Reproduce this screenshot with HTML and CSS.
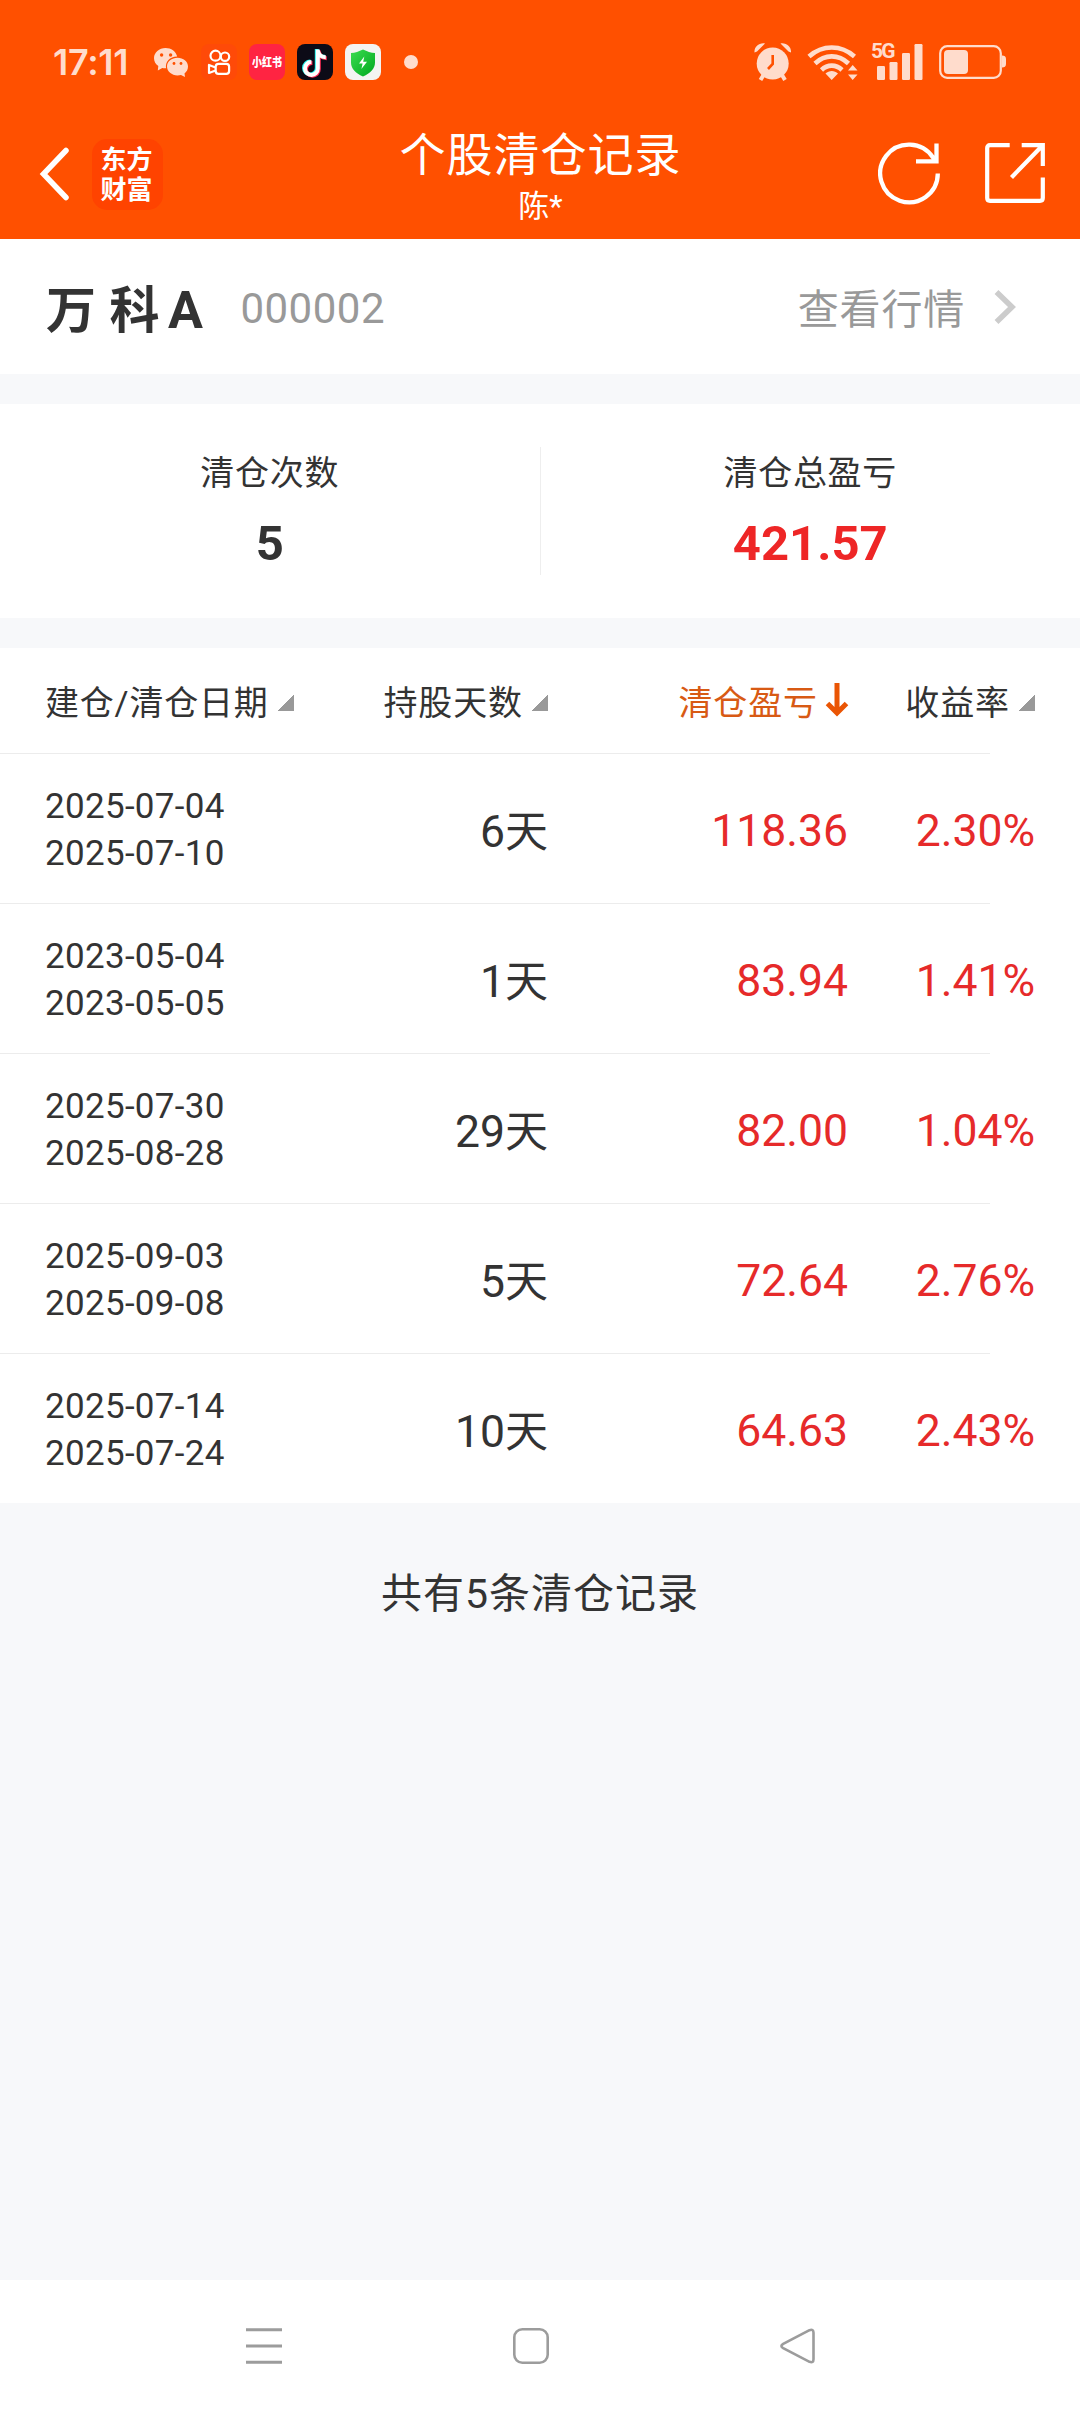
FILE: index.html
```html
<!DOCTYPE html>
<html lang="zh-CN">
<head>
<meta charset="utf-8">
<title>个股清仓记录</title>
<link rel="stylesheet" href="styles.css">
</head>
<body>
<header class="top">
  <div class="status">
    <span class="clock">17:11</span>
    <div class="apps">
      <svg class="wechat" width="34" height="36" viewBox="0 0 34 36"><g fill="#ffdccc"><path d="M11.500 4C5.200 4 0 8.500 0 14.200c0 3.200 1.700 6 4.300 7.900L3.800 26.500l4.500-2.600c1.200.3 2.500.4 3.800.3-1.200-6.500 3.900-11.900 11.100-11.800C21.900 7.500 17.200 4 11.500 4z"/><path d="M34 22.500c0-4.900-4.700-8.800-10.500-8.800S13 17.600 13 22.500s4.700 8.900 10.500 8.900c1.200 0 2.400-.2 3.500-.5l4 2.200-.5-3.700c2.200-1.600 3.500-4.100 3.500-6.900z"/></g><g fill="#ff5000"><circle cx="7.600" cy="11" r="1.700"/><circle cx="16.600" cy="11" r="1.700"/><circle cx="20" cy="19.500" r="1.400"/><circle cx="27" cy="19.500" r="1.400"/></g></svg>
      <svg width="36" height="36" viewBox="0 0 36 36"><rect width="36" height="36" rx="8" fill="#ff4a08"/><g fill="none" stroke="#fff" stroke-width="2.200"><circle cx="14.500" cy="11.700" r="5"/><circle cx="24" cy="12.700" r="4.200"/><rect x="14.700" y="19.800" width="13.400" height="10" rx="2.800"/><path d="M14.500 23.500 8 21v8l6.500-2.500" stroke-linejoin="round"/></g></svg>
      <span class="xhs"><b>小红书</b></span>
      <svg width="36" height="36" viewBox="0 0 36 36"><rect width="36" height="36" rx="8" fill="#0c0b17"/><g fill="none" stroke-width="4"><path d="M19.800 5v19a6.400 6.400 0 1 1-6.400-6.400M19.800 6c.6 4 3.600 6.600 8 6.700" stroke="#25f4ee"/><path d="M21.800 6.500v18.800a6.400 6.400 0 1 1-6.400-6.400M21.800 7.500c.6 4 3.600 6.600 8 6.700" stroke="#fe2c55"/><path d="M20.800 5.500v19a6.400 6.400 0 1 1-6.400-6.400M20.800 6.500c.6 4 3.600 6.600 8 6.700" stroke="#fff"/></g></svg>
      <svg width="36" height="36" viewBox="0 0 36 36"><defs><linearGradient id="g" x2="1" y2="1"><stop stop-color="#3bdc50"/><stop offset="1" stop-color="#00a81e"/></linearGradient></defs><rect width="36" height="36" rx="8" fill="#f4f4f2"/><path d="M18 5.500c4 2 8 3.200 12 3.600v9.400c0 6-4.500 10.800-12 14-7.500-3.200-12-8-12-14V9.100c4-.4 8-1.600 12-3.600z" fill="url(#g)"/><path d="M19.300 12.500 14 19.600h3.600l-1.200 5.400 5.600-7.300h-3.800z" fill="#fff"/></svg>
    </div>
    <i class="dot"></i>
    <div class="signals">
      <svg width="38" height="40" viewBox="0 0 38 40"><g fill="#ffdccc"><circle cx="18.700" cy="21.500" r="16"/><path d="M.5 10.500C0 5 5 .5 11 1.500L3 9.500zM37 10.500C37.500 5 32.500.5 26.500 1.500l8 8z"/></g><path d="m9.500 33-3 5M28 33l3 5" stroke="#ffdccc" stroke-width="4"/><path d="M18.700 13v9l-4.700 5" fill="none" stroke="#ff5000" stroke-width="2.600"/></svg>
      <svg width="52" height="40" viewBox="0 0 52 40"><g fill="none" stroke="#ffdccc" stroke-width="4.600"><path d="M2 14.500c13.500-12 32-12 45.500 0M8 21.500c10-9.500 23.500-9.500 33.500 0M14.500 28c6-5.800 14.500-5.800 20.500 0"/></g><path d="M18.500 31.500c3.500-3.500 9-3.500 12.500 0L24.700 38zM41 28.500l4.700-5.500 4.800 5.500zM41 32.500l4.700 5.500 4.800-5.500z" fill="#ffdccc"/></svg>
      <div class="cell"><b>5G</b><svg width="52" height="38" viewBox="0 0 52 38"><g fill="#ffdccc"><rect x="6" y="23" width="8" height="14" rx="1.200"/><rect x="18.500" y="19" width="8" height="18" rx="1.200"/><rect x="31" y="10" width="8" height="27" rx="1.200"/><rect x="43.500" y="1" width="8" height="36" rx="1.200"/></g></svg></div>
      <svg width="68" height="34" viewBox="0 0 68 34"><rect x="1.200" y="1.200" width="60.600" height="31.600" rx="7" fill="none" stroke="#ffdccc" stroke-width="2.200"/><rect x="5" y="5" width="24" height="24" rx="4" fill="#ffdccc"/><path d="M63 10.500c2.500 0 4 1 4 3.500v5c0 2.500-1.500 3.500-4 3.500z" fill="#ffdccc"/></svg>
    </div>
  </div>
  <div class="bar">
    <div class="bar-left">
      <svg width="32" height="56" viewBox="0 0 32 56"><path d="M27 4.500 4.500 28 27 51.500" fill="none" stroke="#fff" stroke-width="5.500" stroke-linecap="round"/></svg>
      <div class="logo"><span>东方</span><span>财富</span></div>
    </div>
    <div class="titles"><h1>个股清仓记录</h1><p>陈*</p></div>
    <div class="bar-right">
      <svg width="64" height="64" viewBox="0 0 64 64"><path d="M59.800 32.500A28.800 28.800 0 1 1 55 16.500l3.500 4.500M58.500 2.500v17.800h-20.500" fill="none" stroke="#fff" stroke-width="4.300"/></svg>
      <svg width="60" height="60" viewBox="0 0 60 60"><path d="M24.700 2.200H5Q2.200 2.200 2.200 5v50Q2.200 57.800 5 57.800h50Q57.800 57.800 57.800 55V34.500M36.700 2.200h21.100v20.800M57 3 26.500 34.500" fill="none" stroke="#fff" stroke-width="4.200"/></svg>
    </div>
  </div>
</header>

<section class="stock">
  <h2>万 科<span>A</span></h2>
  <span class="code">000002</span>
  <a class="quote"><span>查看行情</span><svg width="22" height="36" viewBox="0 0 22 36"><path d="M2.500 3 18 18 2.500 33" fill="none" stroke="#ccc" stroke-width="5.500"/></svg></a>
</section>

<section class="summary">
  <div class="stat"><span>清仓次数</span><strong>5</strong></div>
  <div class="stat"><span>清仓总盈亏</span><strong class="gain">421.57</strong></div>
</section>

<section class="table">
  <div class="row head">
    <span>建仓/清仓日期<i class="sort"></i></span>
    <span>持股天数<i class="sort"></i></span>
    <span class="active">清仓盈亏<svg width="24" height="34" viewBox="0 0 24 34"><path d="M12 0v30M2.500 20.500 12 30l9.500-9.500" fill="none" stroke="#ea5504" stroke-width="5"/></svg></span>
    <span>收益率<i class="sort"></i></span>
  </div>
  <div class="row"><span class="dates">2025-07-04<br>2025-07-10</span><span class="days">6<small>天</small></span><span class="num">118.36</span><span class="num">2.30%</span></div>
  <div class="row"><span class="dates">2023-05-04<br>2023-05-05</span><span class="days">1<small>天</small></span><span class="num">83.94</span><span class="num">1.41%</span></div>
  <div class="row"><span class="dates">2025-07-30<br>2025-08-28</span><span class="days">29<small>天</small></span><span class="num">82.00</span><span class="num">1.04%</span></div>
  <div class="row"><span class="dates">2025-09-03<br>2025-09-08</span><span class="days">5<small>天</small></span><span class="num">72.64</span><span class="num">2.76%</span></div>
  <div class="row"><span class="dates">2025-07-14<br>2025-07-24</span><span class="days">10<small>天</small></span><span class="num">64.63</span><span class="num">2.43%</span></div>
</section>

<p class="total">共有5条清仓记录</p>

<nav class="keys">
  <svg width="36" height="36" viewBox="0 0 36 36"><path d="M0 1.700h36M0 18h36M0 34.300h36" stroke="#9c9c9c" stroke-width="3"/></svg>
  <svg width="36" height="36" viewBox="0 0 36 36"><rect x="1.300" y="1.300" width="33.400" height="33.400" rx="8" fill="none" stroke="#9c9c9c" stroke-width="2.600"/></svg>
  <svg width="36" height="36" viewBox="0 0 36 36"><path d="M29.500 2.200 3.200 15.800q-3.600 2.200 0 4.400l26.300 13.600q4 1.500 4-2.500V4.700q0-4-4-2.500z" fill="none" stroke="#9c9c9c" stroke-width="2.600"/></svg>
</nav>
</body>
</html>
```
FILE: styles.css
```css
* { box-sizing: border-box; margin: 0; padding: 0; }
body {
  width: 1080px;
  height: 2412px;
  display: flex;
  flex-direction: column;
  background: #f7f8fa;
  color: #333;
  font-family: Roboto, "Noto Sans CJK SC", sans-serif;
  font-weight: 400;
}
svg { display: block; flex: none; }

.top { height: 239px; background: #ff5000; color: #fff; }
.status { height: 124px; padding: 0 73px 0 53px; display: flex; align-items: center; }
.clock { width: 101px; font: 600 36px/40px Inter, sans-serif; color: #ffdccc; letter-spacing: -0.3px; white-space: nowrap; }
.apps { display: flex; gap: 12px; }
.wechat { margin-right: 1px; }
.xhs {
  width: 36px; height: 36px; border-radius: 8px; background: #ff2442; color: #fff;
  display: flex; justify-content: center;
}
.xhs b { font: 900 10px/36px "Noto Sans CJK SC", sans-serif; white-space: nowrap; transform: scaleY(1.25); }
.dot { width: 14px; height: 14px; margin-left: 23px; border-radius: 50%; background: #ffdccc; }
.signals { margin-left: auto; display: flex; align-items: center; gap: 15px; }
.cell { position: relative; margin-left: -3px; margin-right: 1px; }
.cell b { position: absolute; left: 0; top: -2px; font: 700 21px/20px "Roboto", sans-serif; letter-spacing: -1.8px; color: #ffdccc; }

.bar { height: 115px; padding: 0 35px 0 39px; display: grid; grid-template-columns: 1fr auto 1fr; }
.bar-left { display: flex; align-items: center; gap: 21px; height: 100px; }
.logo {
  width: 71px; height: 71px; padding: 4px 2px 0 0; border-radius: 15px; background: #ff4300;
  display: grid; grid-template-rows: 30px 30px; justify-content: center;
  font: 700 26px/30px "Noto Sans CJK SC", sans-serif;
}
.titles { padding-top: 1px; margin-left: -3px; text-align: center; }
.titles h1 { font-size: 46px; line-height: 60px; font-weight: 400; letter-spacing: 1px; }
.titles p { margin-top: 1px; font-size: 31px; line-height: 42px; }
.bar-right { display: flex; align-items: center; justify-content: flex-end; gap: 43px; height: 97px; }

.stock { height: 135px; padding: 0 64px 0 46px; display: flex; align-items: center; background: #fff; }
.stock h2 { padding-top: 8px; font-size: 50px; line-height: 60px; font-weight: 700; letter-spacing: 0.5px; white-space: nowrap; }
.stock h2 span { margin-left: 8px; font-size: 52px; }
.code { margin: 3px 0 0 37px; font-size: 42px; letter-spacing: 0.5px; color: #999; }
.quote { margin-left: auto; display: flex; align-items: center; gap: 29px; font-size: 41px; letter-spacing: 0.8px; color: #999; }
.quote span { margin-bottom: 2px; }

.summary { height: 214px; margin: 30px 0; display: flex; align-items: center; background: #fff; }
.stat { flex: 1; height: 128px; padding-top: 2px; display: flex; flex-direction: column; align-items: center; }
.stat + .stat { border-left: 1px solid #eee; }
.stat span { font-size: 34px; line-height: 48px; letter-spacing: 0.7px; }
.stat strong { margin-top: 17px; font-size: 49px; line-height: 60px; }
.stat .gain { color: #ee2626; }

.table { background: #fff; }
.row {
  height: 150px; padding-left: 45px; display: grid; align-items: center;
  grid-template-columns: 275px 228px 300px 187px;
  background: linear-gradient(#ececec, #ececec) left bottom / 990px 1px no-repeat;
  text-align: right;
}
.row:last-child { height: 149px; background: none; }
.row .dates { padding-top: 2px; font-size: 35px; line-height: 47px; letter-spacing: 0.3px; text-align: left; }
.days { padding-bottom: 2px; font-size: 44.5px; }
.days small { font-size: 43px; }
.num { padding-top: 4px; font-size: 44.5px; color: #e62a2a; }
.head { height: 106px; padding-bottom: 2px; font-size: 34px; letter-spacing: 0.9px; }
.head span { display: flex; align-items: center; justify-content: flex-end; }
.head span:first-child { justify-content: flex-start; letter-spacing: 0.8px; }
.sort { width: 16px; height: 16px; margin: 6px 0 0 9px; background: linear-gradient(135deg, transparent 50%, #999 50%); }
.active { color: #d85a14; }
.active svg { margin: 0 -1px 0 7px; }

.total { margin-top: 61px; font-size: 41px; line-height: 60px; letter-spacing: 1px; text-align: center; }

.keys { height: 132px; margin-top: auto; padding: 0 264px 0 246px; display: flex; align-items: center; justify-content: space-between; background: #fff; }
```
